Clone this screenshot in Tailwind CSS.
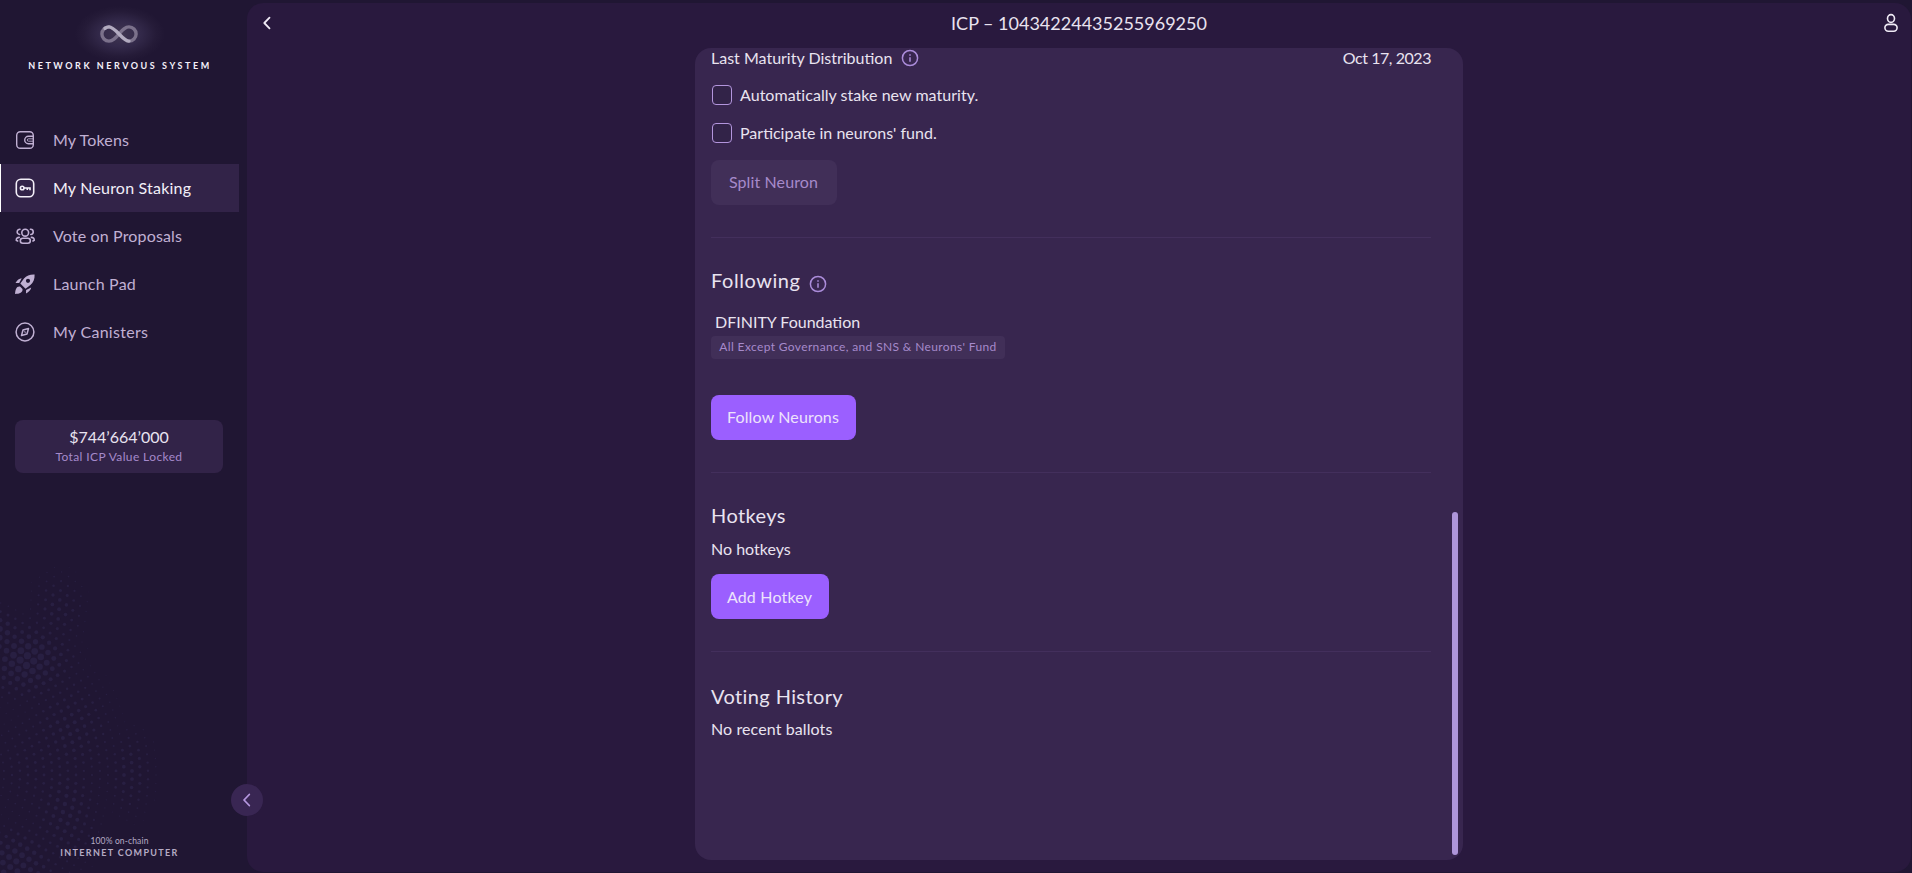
<!DOCTYPE html>
<html lang="en">
<head>
<meta charset="utf-8">
<title>NNS – Neuron</title>
<script src="https://cdn.jsdelivr.net/npm/@tailwindcss/browser@4"></script>
</head>
<body class="flex h-screen overflow-hidden bg-[#201633] font-['Lato',sans-serif] text-base leading-6 text-[#e9e3f0]">
<aside class="relative flex w-[247px] shrink-0 flex-col">
  <svg id="dots" class="absolute left-0 top-[560px]" width="247" height="313" fill="#281f42"></svg>
  <div class="relative flex h-[116px] w-[239px] flex-col items-center pt-[6px]">
    <div class="flex h-14 w-[90px] items-center justify-center bg-[radial-gradient(closest-side,#403651,#33294a_45%,#251b38_80%,#201633)]">
      <svg class="relative -left-px" width="40" height="20" viewBox="0 0 40 20" fill="none" stroke-width="3.4" stroke-linecap="round">
        <path d="M20 10C16.500 14 14 17.100 10 17.100A7.100 7.100 0 0 1 10 2.900M20 10C23.500 6 26 2.900 30 2.900A7.100 7.100 0 0 1 30 17.100" stroke="#7b718b"/>
        <path d="M6 4.200Q8 2.900 10 2.900C16.500 2.900 23.500 17.100 30 17.100" stroke="#b2abc0"/>
      </svg>
    </div>
    <div class="mt-[-3px] whitespace-nowrap pl-[1px] pt-[1px] text-[9px] font-bold leading-3 tracking-[2.55px] text-[#f4f0fa]">NETWORK NERVOUS SYSTEM</div>
  </div>
  <nav class="relative w-[239px] text-[#c0b0d3]">
    <a class="flex h-12 items-center gap-[18px] pl-[15px]">
      <svg width="20" height="20" viewBox="0 0 20 20" fill="none" stroke="currentColor" stroke-width="1.400"><rect x="1.700" y="1.700" width="16.600" height="16.600" rx="3.600"/><path d="M18.300 6.300H13.400a3.700 3.700 0 0 0 0 7.400H18.300"/><path d="M18.300 8.800H13.500a1.200 1.200 0 0 0 0 2.400H18.300" stroke-width=".9"/></svg>
      <span class="tracking-[0.16px]">My Tokens</span></a>
    <a class="flex h-12 items-center gap-[18px] border-l border-white bg-[#322348] pl-[14px] text-[#f3eff8]">
      <svg width="20" height="20" viewBox="0 0 20 20" fill="none" stroke="currentColor" stroke-width="1.600"><rect x="1.300" y="1.300" width="17.400" height="17.400" rx="4.500"/><circle cx="7.200" cy="10" r="1.800"/><path d="M9 10H15V12.300M12.300 10V12.100"/></svg>
      <span class="tracking-[0.2px]">My Neuron Staking</span></a>
    <a class="flex h-12 items-center gap-[18px] pl-[15px]">
      <svg width="20" height="20" viewBox="0 0 20 20" fill="none" stroke="currentColor" stroke-width="1.600" stroke-linecap="round"><circle cx="10.200" cy="6.700" r="3.400"/><rect x="5.300" y="12.300" width="10" height="5" rx="2.500"/><path d="M5 3.300A2.500 2.500 0 0 0 4.600 8.500M15.400 3.300A2.500 2.500 0 0 1 15.800 8.500M4.200 11.400C2.400 11.400 1.200 12.500 1.300 14.300L2.600 15M16.400 11.400C18.200 11.400 19.300 12.500 19.200 14.300L18 15"/></svg>
      <span class="tracking-[0.15px]">Vote on Proposals</span></a>
    <a class="flex h-12 items-center gap-[18px] pl-[15px]">
      <svg width="20" height="20" viewBox="0 0 20 20" fill="currentColor"><path fill-rule="evenodd" d="M19.600.4C15 .2 11.500 1.600 9 4.600L5.300 9.500 10.500 14.700 15.400 11C18.400 8.500 19.800 5 19.600.4ZM13 4.700a2.100 2.100 0 1 1 0 4.200 2.100 2.100 0 0 1 0-4.200Z"/><path d="M6.700 4.200C4.200 4.300 2.300 6.100.5 9L4.200 8.900ZM16.200 13.500C15.900 16 13.900 17.900 11 19.600L11.100 15.900ZM5 12.500C1.500 12 .3 15.500.1 20 4.600 19.800 8 18.500 7.500 15Z"/></svg>
      <span class="tracking-[0.2px]">Launch Pad</span></a>
    <a class="flex h-12 items-center gap-[18px] pl-[15px]">
      <svg width="20" height="20" viewBox="0 0 20 20" fill="none" stroke="currentColor" stroke-width="1.500" stroke-linejoin="round"><circle cx="10" cy="10" r="8.900"/><path d="M13.500 6.500 12 12 6.500 13.500 8 8ZM9.600 10.400 10.400 9.600"/></svg>
      <span class="tracking-[0.28px]">My Canisters</span></a>
  </nav>
  <div class="relative ml-[15px] mt-[64px] flex h-[53px] w-[208px] flex-col items-center rounded-lg bg-[#322348] pt-[6px]">
    <div class="leading-[22px]">$744’664’000</div>
    <div class="pt-px text-xs leading-4 tracking-[0.38px] text-[#a68acb]">Total ICP Value Locked</div>
  </div>
  <footer class="relative mt-auto flex w-[239px] flex-col items-center pb-[14px] text-[#b5abc4]">
    <div class="text-[8.5px] leading-3 tracking-[0.14px]">100% on-chain</div>
    <div class="text-[9px] font-bold leading-3 tracking-[1.35px]">INTERNET COMPUTER</div>
  </footer>
  <button class="absolute left-[231px] top-[784px] z-10 flex size-8 items-center justify-center rounded-full bg-[#392653]">
    <svg width="12" height="14" viewBox="0 0 12 14" fill="none" stroke="#b697e0" stroke-width="1.800" stroke-linecap="round" stroke-linejoin="round"><path d="M8.300 1.500 3 7 8.300 12.500"/></svg>
  </button>
</aside>
<main class="mb-px mr-px mt-[3px] flex flex-1 flex-col items-center rounded-2xl bg-[#29193e]">
  <header class="flex h-10 w-full items-center justify-between pl-[14px] pr-[12px]">
    <svg width="12" height="14" viewBox="0 0 12 14" fill="none" stroke="#efeaf5" stroke-width="1.800" stroke-linecap="round" stroke-linejoin="round"><path d="M8.500 1.700 3.300 7 8.500 12.300"/></svg>
    <h1 class="pl-[2px] text-lg leading-6">ICP – 10434224435255969250</h1>
    <svg width="16" height="20" viewBox="0 0 16 20" fill="none" stroke="#efeaf5" stroke-width="1.600"><ellipse cx="8" cy="5.500" rx="3.500" ry="3.900"/><rect x="1.900" y="11.400" width="12.200" height="6.800" rx="3.400"/></svg>
  </header>
  <section class="relative mt-[5px] h-[812px] w-[768px] overflow-hidden rounded-2xl bg-[#38264f] pl-4 pr-8">
    <div class="mt-[-2px] flex items-center justify-between">
      <div class="flex items-center gap-[9px]"><span>Last Maturity Distribution</span>
        <svg width="18" height="18" viewBox="0 0 18 18" fill="none" stroke="#ab8cda" stroke-width="1.500"><circle cx="9" cy="9" r="7.600"/><path d="M9 8.200V12.700M9 5.300V6.700"/></svg></div>
      <span class="tracking-[-0.45px]">Oct 17, 2023</span>
    </div>
    <div class="mt-[13px] flex items-center gap-2 pl-px"><span class="size-5 rounded border border-[#b395dd] bg-[#322348]"></span><span class="tracking-[0.04px]">Automatically stake new maturity.</span></div>
    <div class="mt-[14px] flex items-center gap-2 pl-px"><span class="size-5 rounded border border-[#b395dd] bg-[#322348]"></span><span>Participate in neurons' fund.</span></div>
    <button class="mt-[15px] block h-[45px] w-[126px] rounded-lg bg-[#412f58] pb-[2px] pr-px tracking-[0.12px] text-[#a68acb]">Split Neuron</button>
    <hr class="mt-8 border-[#432f5c]">
    <div class="mt-7 flex items-center gap-[9px]"><h2 class="text-xl leading-7 tracking-[0.55px]">Following</h2>
      <svg class="mt-[6px] -mb-[2px]" width="18" height="18" viewBox="0 0 18 18" fill="none" stroke="#ab8cda" stroke-width="1.500"><circle cx="9" cy="9" r="7.600"/><path d="M9 8.200V12.700M9 5.300V6.700"/></svg></div>
    <p class="mt-4 pl-[4px]">DFINITY Foundation</p>
    <div class="mt-[2px] flex h-[23px] w-[294px] items-center justify-center rounded bg-[#412f58] pb-px text-xs tracking-[0.36px] text-[#a68acb]">All Except Governance, and SNS &amp; Neurons' Fund</div>
    <button class="mt-9 block h-[45px] w-[145px] rounded-lg bg-[#9b5fff] pb-[2px] pr-px tracking-[0.14px] text-[#ede3fb]">Follow Neurons</button>
    <hr class="mt-8 border-[#432f5c]">
    <h2 class="mt-7 text-xl leading-7 tracking-[0.42px]">Hotkeys</h2>
    <p class="mt-2">No hotkeys</p>
    <button class="mt-[13px] block h-[45px] w-[118px] rounded-lg bg-[#9b5fff] pr-px tracking-[0.17px] text-[#ede3fb]">Add Hotkey</button>
    <hr class="mt-8 border-[#432f5c]">
    <h2 class="mt-[30px] text-xl leading-7 tracking-[0.4px]">Voting History</h2>
    <p class="mt-[7px] tracking-[0.1px]">No recent ballots</p>
    <div class="absolute right-[5px] top-[464px] h-[343px] w-[6px] rounded-full bg-[#ae95d9]"></div>
  </section>
</main>
<script>
// Halftone backdrop: rings of dots whose size follows a few soft clusters.
const clusters = [[26, 100, 42, 34, 3.7], [2, 75, 18, 25, 3], [58, 50, 26, 36, 2], [70, 170, 42, 55, 2.1], [130, 212, 24, 42, 2], [66, 252, 32, 55, 2.3], [14, 303, 40, 34, 3.1], [42, 205, 60, 60, 1.5], [100, 200, 40, 50, 1.2], [70, 130, 38, 30, 1.3]];
let out = '';
for (let r = 50, k = 0; r < 260; r += 8, k++) {
  const n = Math.round(2 * Math.PI * r / 8.3);
  for (let i = 0; i < n; i++) {
    const a = (i + (k % 2) / 2) / n * 2 * Math.PI;
    const x = -70 + r * Math.cos(a), y = 215 + r * Math.sin(a);
    if (x < -4 || x > 165 || y < 0 || y > 317) continue;
    let s = 0;
    for (const [cx, cy, sx, sy, m] of clusters) s = Math.max(s, m * Math.exp(-(((x - cx) / sx) ** 2 + ((y - cy) / sy) ** 2) * 0.9));
    if (s > 0.45) out += `<circle cx="${x.toFixed(1)}" cy="${y.toFixed(1)}" r="${s.toFixed(2)}"/>`;
  }
}
document.getElementById('dots').innerHTML = out;
</script>
</body>
</html>
